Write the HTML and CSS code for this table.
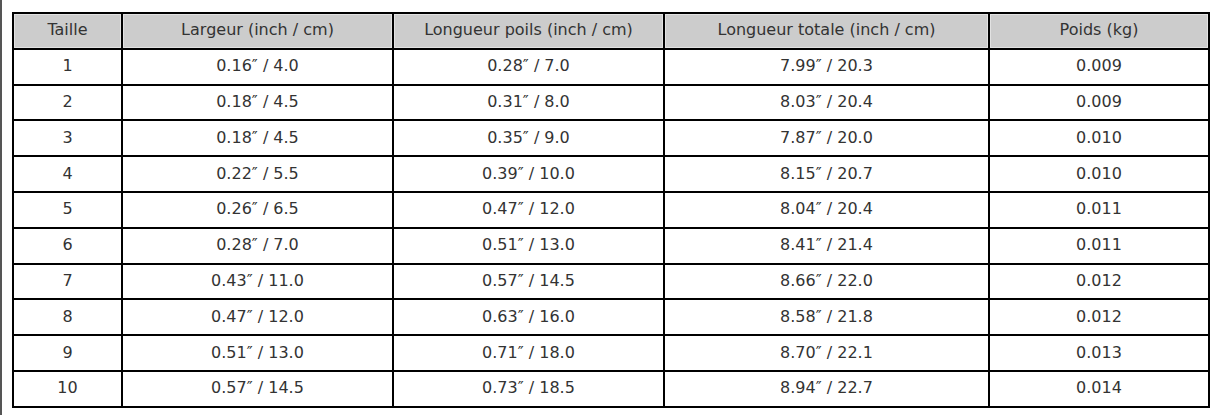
FILE: index.html
```html
<!DOCTYPE html>
<html lang="fr">
<head>
<meta charset="utf-8">
<link rel="stylesheet" href="styles.css">
</head>
<body>
<div class="page">
<table class="sizes">
<colgroup>
<col class="c1"><col class="c2"><col class="c3"><col class="c4"><col class="c5">
</colgroup>
<thead>
<tr><th>Taille</th><th>Largeur (inch / cm)</th><th>Longueur poils (inch / cm)</th><th>Longueur totale (inch / cm)</th><th>Poids (kg)</th></tr>
</thead>
<tbody>
<tr><td>1</td><td>0.16″ / 4.0</td><td>0.28″ / 7.0</td><td>7.99″ / 20.3</td><td>0.009</td></tr>
<tr><td>2</td><td>0.18″ / 4.5</td><td>0.31″ / 8.0</td><td>8.03″ / 20.4</td><td>0.009</td></tr>
<tr><td>3</td><td>0.18″ / 4.5</td><td>0.35″ / 9.0</td><td>7.87″ / 20.0</td><td>0.010</td></tr>
<tr><td>4</td><td>0.22″ / 5.5</td><td>0.39″ / 10.0</td><td>8.15″ / 20.7</td><td>0.010</td></tr>
<tr><td>5</td><td>0.26″ / 6.5</td><td>0.47″ / 12.0</td><td>8.04″ / 20.4</td><td>0.011</td></tr>
<tr><td>6</td><td>0.28″ / 7.0</td><td>0.51″ / 13.0</td><td>8.41″ / 21.4</td><td>0.011</td></tr>
<tr><td>7</td><td>0.43″ / 11.0</td><td>0.57″ / 14.5</td><td>8.66″ / 22.0</td><td>0.012</td></tr>
<tr><td>8</td><td>0.47″ / 12.0</td><td>0.63″ / 16.0</td><td>8.58″ / 21.8</td><td>0.012</td></tr>
<tr><td>9</td><td>0.51″ / 13.0</td><td>0.71″ / 18.0</td><td>8.70″ / 22.1</td><td>0.013</td></tr>
<tr><td>10</td><td>0.57″ / 14.5</td><td>0.73″ / 18.5</td><td>8.94″ / 22.7</td><td>0.014</td></tr>
</tbody>
</table>
</div>
</body>
</html>
```
FILE: styles.css
```css
html, body {
  margin: 0;
  padding: 0;
  background: #fff;
}
.page {
  border-left: 2px solid #555;
  height: 415px;
  box-sizing: border-box;
  padding: 12px 0 0 10px;
  font-family: "DejaVu Sans", sans-serif;
  font-size: 16px;
  color: #333;
}
.sizes {
  border-collapse: collapse;
  table-layout: fixed;
  width: 1196px;
}
.c1 { width: 109px; }
.c2 { width: 271px; }
.c3 { width: 271px; }
.c4 { width: 325px; }
.c5 { width: 220px; }
.sizes th, .sizes td {
  border: 2px solid #000;
  height: 33.7px;
  padding: 0 0 2px 0;
  box-sizing: border-box;
  text-align: center;
  vertical-align: middle;
}
.sizes th, .sizes td { height: 35.8px; }
.sizes th {
  background: #ccc;
  font-weight: normal;
  box-shadow: inset 0 0 0 1px #e2e2e2;
}
```
